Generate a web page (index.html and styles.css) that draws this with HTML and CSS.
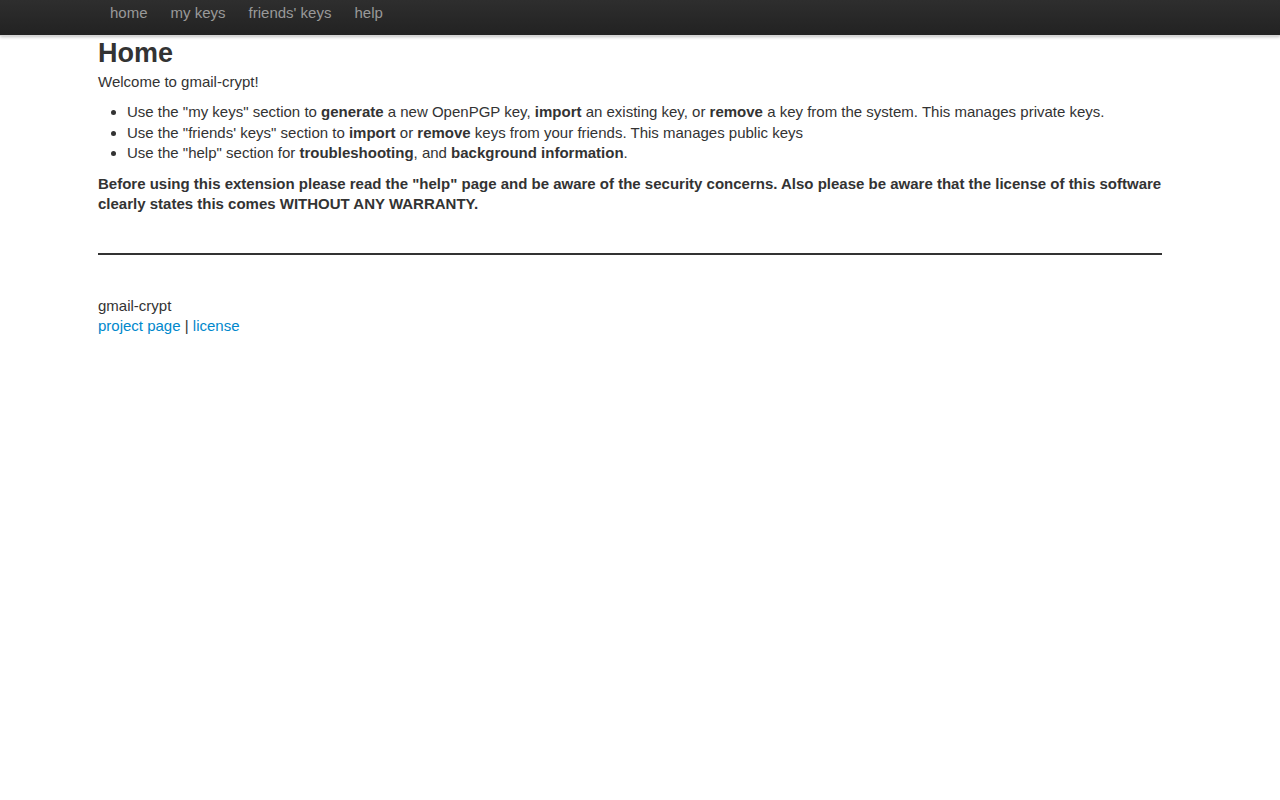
FILE: index.html
```html
<!DOCTYPE html>
<html lang="en">
<head>
<meta charset="utf-8">
<title>gmail-crypt</title>
<link rel="stylesheet" href="styles.css">
</head>
<body>
<div class="navbar">
  <ul class="nav">
    <li><a href="#">home</a></li>
    <li><a href="#">my keys</a></li>
    <li><a href="#">friends' keys</a></li>
    <li><a href="#">help</a></li>
  </ul>
</div>
<div class="container">
  <h1>Home</h1>
  <p>Welcome to gmail-crypt!</p>
  <ul class="list">
    <li>Use the "my keys" section to <b>generate</b> a new OpenPGP key, <b>import</b> an existing key, or <b>remove</b> a key from the system. This manages private keys.</li>
    <li>Use the "friends' keys" section to <b>import</b> or <b>remove</b> keys from your friends. This manages public keys</li>
    <li>Use the "help" section for <b>troubleshooting</b>, and <b>background information</b>.</li>
  </ul>
  <p class="warning">Before using this extension please read the "help" page and be aware of the security concerns. Also please be aware that the license of this software clearly states this comes WITHOUT ANY WARRANTY.</p>
  <hr class="rule">
  <div class="footer">
    <div>gmail-crypt</div>
    <div><a href="#">project page</a> | <a href="#">license</a></div>
  </div>
</div>
</body>
</html>
```

FILE: styles.css
```css
html, body {
  margin: 0;
  padding: 0;
  background: #fff;
}
body {
  font-family: "Liberation Sans", Arial, Helvetica, sans-serif;
  font-size: 15px;
  line-height: 20px;
  color: #333;
}
a {
  color: #0088cc;
  text-decoration: none;
}
.navbar {
  height: 35px;
  background-color: #262626;
  background-image: linear-gradient(to bottom, #2e2e2e, #222222);
  box-shadow: 0 1px 3px rgba(0, 0, 0, 0.25);
  border-bottom: 1px solid #d4d4d4;
}
.nav {
  list-style: none;
  margin: 0 0 0 98.5px;
  padding: 0;
  display: flex;
}
.nav a {
  display: block;
  padding: 3px 11.5px 12px;
  color: #999;
  line-height: 20px;
}
.container {
  margin-left: 98px;
  width: 1064px;
}
h1 {
  margin: 3px 0 0;
  font-size: 27px;
  line-height: 28px;
  font-weight: bold;
  color: #333;
}
p {
  margin: 5px 0 10px;
}
.list {
  margin: 0 0 10px;
  padding-left: 29px;
}
.list li {
  line-height: 20.5px;
}
.warning {
  font-weight: bold;
  margin: 9px 0 0;
}
.rule {
  margin: 39.5px 0 40.5px;
  border: 0;
  border-top: 2px solid #333;
  height: 0;
}
.footer {
  line-height: 20px;
}
```
